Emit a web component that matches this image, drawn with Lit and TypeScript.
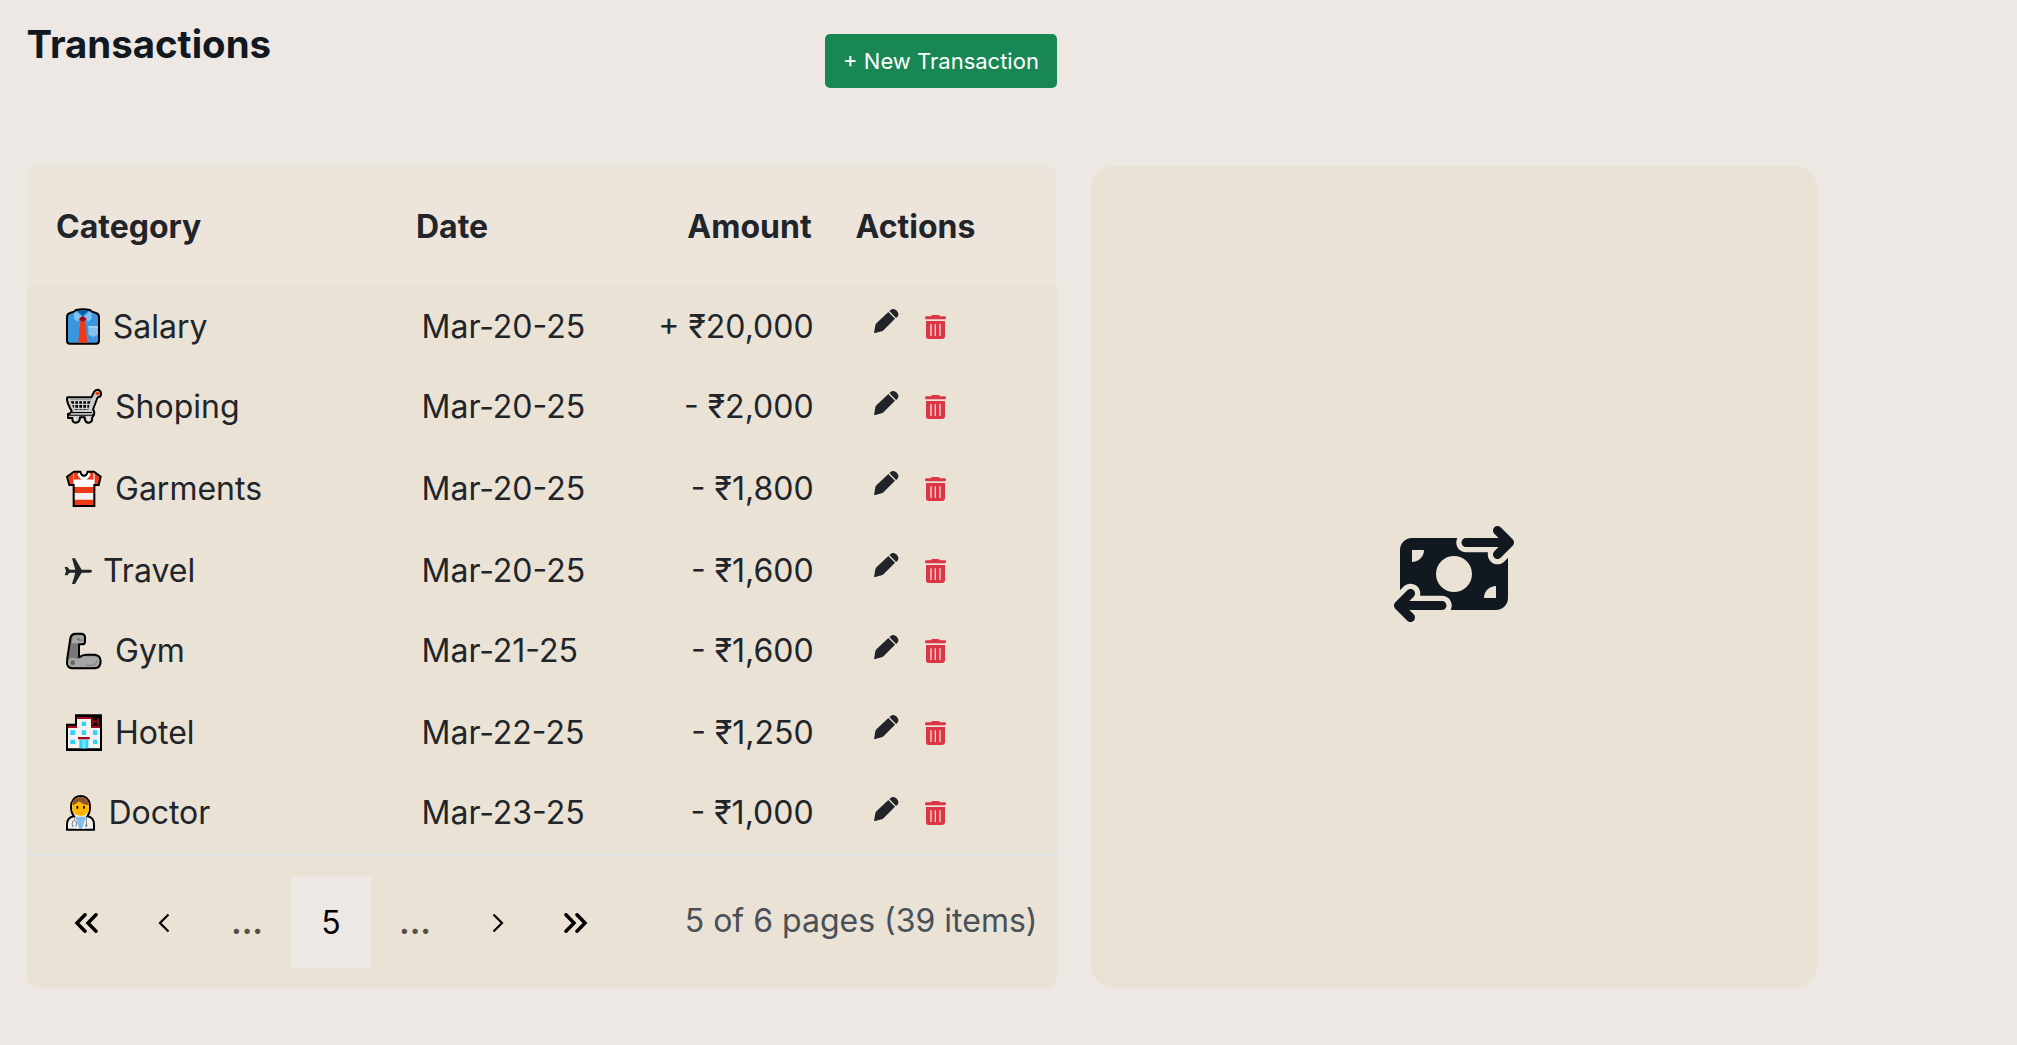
import { LitElement, html, css, svg, nothing } from "lit";
import { customElement, property } from "lit/decorators.js";

interface Transaction {
  icon: string;
  slot: number;
  category: string;
  date: string;
  amount: string;
}

const TRANSACTIONS: Transaction[] = [
  { icon: "shirt", slot: 46.8, category: "Salary", date: "Mar-20-25", amount: "+ ₹20,000" },
  { icon: "cart", slot: 49, category: "Shoping", date: "Mar-20-25", amount: "- ₹2,000" },
  { icon: "tshirt", slot: 49, category: "Garments", date: "Mar-20-25", amount: "- ₹1,800" },
  { icon: "plane", slot: 39, category: "Travel", date: "Mar-20-25", amount: "- ₹1,600" },
  { icon: "arm", slot: 49, category: "Gym", date: "Mar-21-25", amount: "- ₹1,600" },
  { icon: "hotel", slot: 49, category: "Hotel", date: "Mar-22-25", amount: "- ₹1,250" },
  { icon: "doctor", slot: 42.4, category: "Doctor", date: "Mar-23-25", amount: "- ₹1,000" },
];

const shapes: Record<string, { box: string; w: number; h: number; body: unknown }> = {
  shirt: {
    box: "48 54 108 111", w: 36, h: 37,
    body: svg`
      <path d="M60 69L72 65L78 60Q98 56 120 60L126 65L138 69Q147 71 147 82V152Q147 161 138 161H60Q51 161 51 152V82Q51 71 60 69Z" fill="#3a96dd" stroke="#000" stroke-width="6" stroke-linejoin="round"/>
      <path d="M82 63H115L98 78Z" fill="#0063b1"/>
      <path d="M78 64L96 79L82 95L72 86V70Z" fill="#83beec"/>
      <path d="M119 64L101 79L115 95L125 86V70Z" fill="#83beec"/>
      <path d="M91 92H106L112 158H85Z" fill="#f03a17"/>
      <path d="M98 77L110 86L103 94H93L87 86Z" fill="#a4081f"/>
      <path d="M115 108H144V134Q137 137 130 141Q122 136 115 135Z" fill="#83beec"/>
      <path d="M115 108H144V113H115Z" fill="#a9d3f4"/>`,
  },
  cart: {
    box: "48 297 108 111", w: 36, h: 37,
    body: svg`
      <path d="M52 325H124L132 309Q137 300 147 303Q157 310 151 322L142 326L129 361Q136 371 130 381L126 387Q128 400 117 401Q104 402 104 385H90Q90 401 77 401Q66 400 67 387H54V375L62 372L65 366Q50 340 51 328Z" fill="#ccc" stroke="#000" stroke-width="6" stroke-linejoin="round"/>
      <path d="M61 332H122L115 362H72Z" fill="#000"/>
      <path d="M60 335H122M64 346H120M68 358H116M74 332V362M86 332V362M98 332V362M110 332V362" stroke="#ccc" stroke-width="4"/>
      <path d="M66 371H126M55 378H133" stroke="#000" stroke-width="4"/>
      <path d="M62 375H126" stroke="#ccc" stroke-width="4"/>
      <path d="M136 314Q139 305 147 308Q152 313 147 318L139 320Z" fill="#f03a17"/>
      <path d="M140 317L124 360" stroke="#ccc" stroke-width="4"/>
      <path d="M75 385V394M115 385V394" stroke="#f2f2f2" stroke-width="5"/>`,
  },
  tshirt: {
    box: "48 540 108 111", w: 36, h: 37,
    body: svg`
      <path d="M72 545H92Q95 557 102 557Q109 557 112 545H132L152 560L146 585H133V648H71V585H58L51 560Z" fill="#f2f2f2"/>
      <path d="M72 547H88L82 556H72ZM116 547H130V556H122ZM72 556H83Q92 570 102 570Q112 570 121 556H130V569H72ZM72 591H131V609H72ZM72 629H131V645H72Z" fill="#f03a17"/>
      <path d="M54 561L70 549V583H60ZM150 561L134 549V583H144Z" fill="#f03a17"/>
      <path d="M72 569H132V589H72Z" fill="#fff"/>
      <path d="M86 550Q91 567 102 567Q113 567 118 550" fill="none" stroke="#fff" stroke-width="6"/>
      <path d="M72 545H91Q94 557 102 557Q110 557 113 545H132L152 560L146 585H133V648H71V585H58L51 560Z" fill="none" stroke="#000" stroke-width="6"/>`,
  },
  plane: {
    box: "24 53 84 80", w: 28, h: 26.7,
    body: svg`<path d="M108 92Q108 97 102 97H77L57 131H48L58 97H41L34 105H26L30 93V91L26 80H34L41 88H58L48 54H57L77 88H102Q108 88 108 92Z" fill="#212529"/>`,
  },
  arm: {
    box: "48 184 108 114", w: 36, h: 38,
    body: svg`
      <path d="M52 262L61 203Q63 189 77 189H95Q105 190 105 200V213Q105 221 96 221H87V260Q99 251 112 252H135Q152 255 152 272Q152 291 136 293H66Q51 291 51 277Z" fill="#777" stroke="#000" stroke-width="6" stroke-linejoin="round"/>
      <path d="M68 199Q72 194 80 194H95Q102 195 102 203V214Q101 218 94 218H65Z" fill="#a6a6a6"/>
      <path d="M56 267Q64 258 78 264Q90 266 100 257H132Q149 257 148 273Q147 287 134 289H69Q55 288 54 276Z" fill="#a6a6a6"/>
      <circle cx="68" cy="276" r="7" fill="#666"/>
      <path d="M80 205Q88 210 101 208M109 284H124Q139 284 140 271" fill="none" stroke="#777" stroke-width="3"/>
      <circle cx="86" cy="206" r="4" fill="#777"/>`,
  },
  hotel: {
    box: "48 432 108 111", w: 36, h: 37,
    body: svg`
      <path d="M48 461H75V433H156V543H48Z" fill="#000"/>
      <path d="M54 470H81V442H123V470H150V535H54Z" fill="#f2f2f2"/>
      <path d="M54 467H81V474H54ZM81 441H123V447H81ZM123 467H150V474H123Z" fill="#a4081f"/>
      <path d="M127 445V465M144 445V465M127 455H144" stroke="#a4081f" stroke-width="5"/>
      <path d="M95 455H108V468H95ZM61 481H75V495H61ZM95 481H108V495H95ZM129 481H142V495H129ZM61 509H75V522H61ZM129 509H142V522H129ZM88 509H115V535H88Z" fill="#31d2f7"/>
      <path d="M97 509H107V535H97Z" fill="#6fe4fa"/>
      <path d="M84 501H119V508H84Z" fill="#a4081f"/>`,
  },
  doctor: {
    box: "48 672 90 111", w: 30, h: 37,
    body: svg`
      <path d="M51 779V764Q51 742 72 739Q60 723 64 700Q72 678 92 678Q112 678 119 700Q123 723 112 739Q132 742 132 764V779Z" fill="#f2f2f2" stroke="#000" stroke-width="6"/>
      <path d="M67 700Q73 682 92 682Q110 682 116 700L117 720Q113 737 92 738Q70 736 67 720Z" fill="#ffb900"/>
      <path d="M67 706Q69 681 92 681Q114 681 117 706L109 704Q96 703 87 694Q79 702 72 704Z" fill="#8e562e"/>
      <path d="M84 728Q91 732 99 728" fill="none" stroke="#f28a1c" stroke-width="3"/>
      <path d="M82 708V716M102 708V716" stroke="#000" stroke-width="5"/>
      <path d="M74 740H110L97 777H87Z" fill="#83beec"/>
      <path d="M74 741L85 777M110 741L99 777" stroke="#fff" stroke-width="4"/>
      <path d="M74 741V751Q65 752 67 769H71M76 752Q82 758 78 769M109 741V766" fill="none" stroke="#777" stroke-width="3"/>
      <circle cx="109" cy="767" r="3.5" fill="#777"/>`,
  },
  pencil: {
    box: "0 0 74 73", w: 24.7, h: 24.3,
    body: svg`<path d="M0 73L4 49Q5 45 8 42L43 9L63 29L30 62Q27 65 23 67ZM46 6L51 2Q58 -3 67 4L71 9Q76 17 70 24L66 27Z" fill="#212529"/>`,
  },
  trash: {
    box: "0 0 63 72", w: 21, h: 24,
    body: svg`<path fill-rule="evenodd" d="M3 4H17Q19 0 24 0H38Q43 0 45 4H59Q63 4 63 8Q63 13 59 13H3Q0 13 0 8Q0 4 3 4ZM3 18H60V65Q58 72 52 72H10Q4 72 3 65ZM16 28V63H20V28ZM29 28V63H33V28ZM43 28V63H47V28Z" fill="#dc3545"/>`,
  },
  transfer: {
    box: "0 0 640 512", w: 120, h: 96,
    body: svg`<path fill="#11181f" d="M535 41c-9.400-9.400-9.400-24.600 0-33.900s24.600-9.400 33.900 0l64 64c4.500 4.500 7 10.600 7 17s-2.500 12.500-7 17l-64 64c-9.400 9.400-24.600 9.400-33.900 0s-9.400-24.600 0-33.900l23-23L384 112c-13.300 0-24-10.700-24-24s10.700-24 24-24l174.100 0L535 41zM105 377l-23 23L256 400c13.300 0 24 10.700 24 24s-10.700 24-24 24L81.900 448l23 23c9.400 9.400 9.400 24.600 0 33.900s-24.600 9.400-33.900 0L7 441c-4.500-4.500-7-10.600-7-17s2.500-12.500 7-17l64-64c9.400-9.400 24.600-9.400 33.900 0s9.400 24.600 0 33.900zM96 64H337.900c-3.700 7.200-5.900 15.300-5.900 24c0 28.700 23.300 52 52 52l117.400 0c-4 17 .6 35.500 13.800 48.800c20.300 20.300 53.200 20.300 73.500 0L608 169.500V384c0 35.300-28.700 64-64 64H302.100c3.700-7.200 5.900-15.300 5.900-24c0-28.700-23.300-52-52-52l-117.400 0c4-17-.6-35.500-13.800-48.800c-20.300-20.300-53.200-20.300-73.500 0L32 342.500V128c0-35.300 28.700-64 64-64zm64 64H96v64c35.300 0 64-28.700 64-64zM544 320c-35.300 0-64 28.700-64 64h64V320zM320 352a96 96 0 1 0 0-192 96 96 0 1 0 0 192z"/>`,
  },
  first: {
    box: "0 0 24 20", w: 24, h: 20,
    body: svg`<path d="M11 1.800L3 10L11 18.200M22 1.800L14 10L22 18.200" fill="none" stroke="#000" stroke-width="3.500" stroke-linecap="round"/>`,
  },
  prev: {
    box: "0 0 12 20", w: 12, h: 20,
    body: svg`<path d="M10.500 1.500L2 10L10.500 18.500" fill="none" stroke="#000" stroke-width="2.200"/>`,
  },
  next: {
    box: "0 0 12 20", w: 12, h: 20,
    body: svg`<path d="M1.500 1.500L10 10L1.500 18.500" fill="none" stroke="#000" stroke-width="2.200"/>`,
  },
  last: {
    box: "0 0 24 20", w: 24, h: 20,
    body: svg`<path d="M2 1.800L10 10L2 18.200M13 1.800L21 10L13 18.200" fill="none" stroke="#000" stroke-width="3.500" stroke-linecap="round"/>`,
  },
};

@customElement("app-icon")
class AppIcon extends LitElement {
  @property() name = "";
  static styles = css`
    :host { display: block; flex: none; line-height: 0; }
    svg { display: block; }
  `;
  render() {
    const s = shapes[this.name];
    return s
      ? html`<svg width=${s.w} height=${s.h} viewBox=${s.box} preserveAspectRatio="none">${s.body}</svg>`
      : nothing;
  }
}

@customElement("app-root")
class AppRoot extends LitElement {
  static styles = css`
    :host {
      display: block;
      box-sizing: border-box;
      height: 1045px;
      padding: 0 200px 0 27px;
      background: #ede8e4;
      color: #212529;
      font-family: Inter, "Liberation Sans", sans-serif;
      font-size: 32px;
      line-height: 48px;
      overflow: hidden;
    }
    * { box-sizing: border-box; }
    .top {
      display: flex;
      justify-content: space-between;
      align-items: flex-start;
      width: 1030px;
      height: 166px;
    }
    h1 {
      margin: 20px 0 0 -0.5px;
      font-size: 38.4px;
      line-height: 48px;
      font-weight: 700;
      color: #11181f;
    }
    .new {
      width: 232px;
      height: 54px;
      margin-top: 34px;
      padding: 0 0 1px;
      border: 0;
      border-radius: 5px;
      background: #198754;
      color: #fff;
      font: 400 22px/52px Inter, "Liberation Sans", sans-serif;
      text-align: center;
    }
    .main {
      display: grid;
      grid-template-columns: 1030px 726px;
      column-gap: 34px;
      height: 822px;
    }
    .grid {
      display: flex;
      flex-direction: column;
      background: #e9e2d5;
      border-radius: 10px;
      overflow: hidden;
    }
    .head, .row {
      display: grid;
      grid-template-columns: 360px 200px 197.6px 1fr;
      align-items: start;
    }
    .head {
      flex: none;
      height: 120px;
      padding: 37px 0 0 29px;
      background: #ede4db;
      font-weight: 700;
      white-space: nowrap;
    }
    .head .date { padding: 0; }
    .head .amount { padding-right: 2px; }
    .head .actions { padding-left: 42px; }
    .rows { flex: none; height: 570px; border-bottom: 2px solid #dee2e6; }
    .row { height: 82px; padding: 16px 0 0 29px; white-space: nowrap; }
    .row:nth-child(1), .row:nth-child(4), .row:nth-child(6) { height: 80px; }
    .label, .row .date, .row .amount { padding-top: 1px; }
    .cat { display: flex; align-items: flex-start; padding-left: 10px; }
    .slot { flex: none; padding-top: 6px; }
    .slot.plane { margin-left: -2px; padding: 12px 0 0; }
    .date { padding-left: 5.5px; }
    .amount { text-align: right; }
    .actions { display: flex; align-items: flex-start; padding-left: 60.4px; gap: 26px; }
    .edit { padding-top: 7px; }
    .late .edit { padding-top: 9px; }
    .del { padding-top: 13px; }
    .foot { display: flex; flex: 1; padding: 20px 19.5px 0 20px; }
    .pages { display: flex; height: 92px; color: #000; }
    .page { display: flex; align-items: center; justify-content: center; width: 78px; height: 92px; padding-top: 2px; }
    .dots { color: #564f48; width: 88px; font-weight: 700; }
    .current { width: 80px; background: #ede8e4; }
    .info { margin-left: auto; padding-top: 21px; color: #495057; }
    .side {
      display: flex;
      align-items: center;
      justify-content: center;
      background: #e9e2d5;
      border-radius: 22px;
      padding-bottom: 6px;
    }
  `;

  private renderRow(t: Transaction, i: number) {
    const late = i === 1 || i === 4 || i === 6;
    return html`<div class="row ${late ? "late" : ""}">
      <div class="cat">
        <span class="slot ${t.icon}" style="width:${t.slot}px"><app-icon name=${t.icon}></app-icon></span>
        <span class="label">${t.category}</span>
      </div>
      <span class="date">${t.date}</span>
      <span class="amount">${t.amount}</span>
      <div class="actions">
        <app-icon class="edit" name="pencil"></app-icon>
        <app-icon class="del" name="trash"></app-icon>
      </div>
    </div>`;
  }

  render() {
    return html`
      <header class="top">
        <h1>Transactions</h1>
        <button class="new">+ New Transaction</button>
      </header>
      <main class="main">
        <section class="grid">
          <div class="head">
            <span>Category</span><span class="date">Date</span><span class="amount">Amount</span><span class="actions">Actions</span>
          </div>
          <div class="rows">${TRANSACTIONS.map((t, i) => this.renderRow(t, i))}</div>
          <div class="foot">
            <div class="pages">
              <span class="page"><app-icon name="first"></app-icon></span>
              <span class="page"><app-icon name="prev"></app-icon></span>
              <span class="page dots">...</span>
              <span class="page current">5</span>
              <span class="page dots">...</span>
              <span class="page"><app-icon name="next"></app-icon></span>
              <span class="page"><app-icon name="last"></app-icon></span>
            </div>
            <span class="info">5 of 6 pages (39 items)</span>
          </div>
        </section>
        <aside class="side"><app-icon name="transfer"></app-icon></aside>
      </main>`;
  }
}
